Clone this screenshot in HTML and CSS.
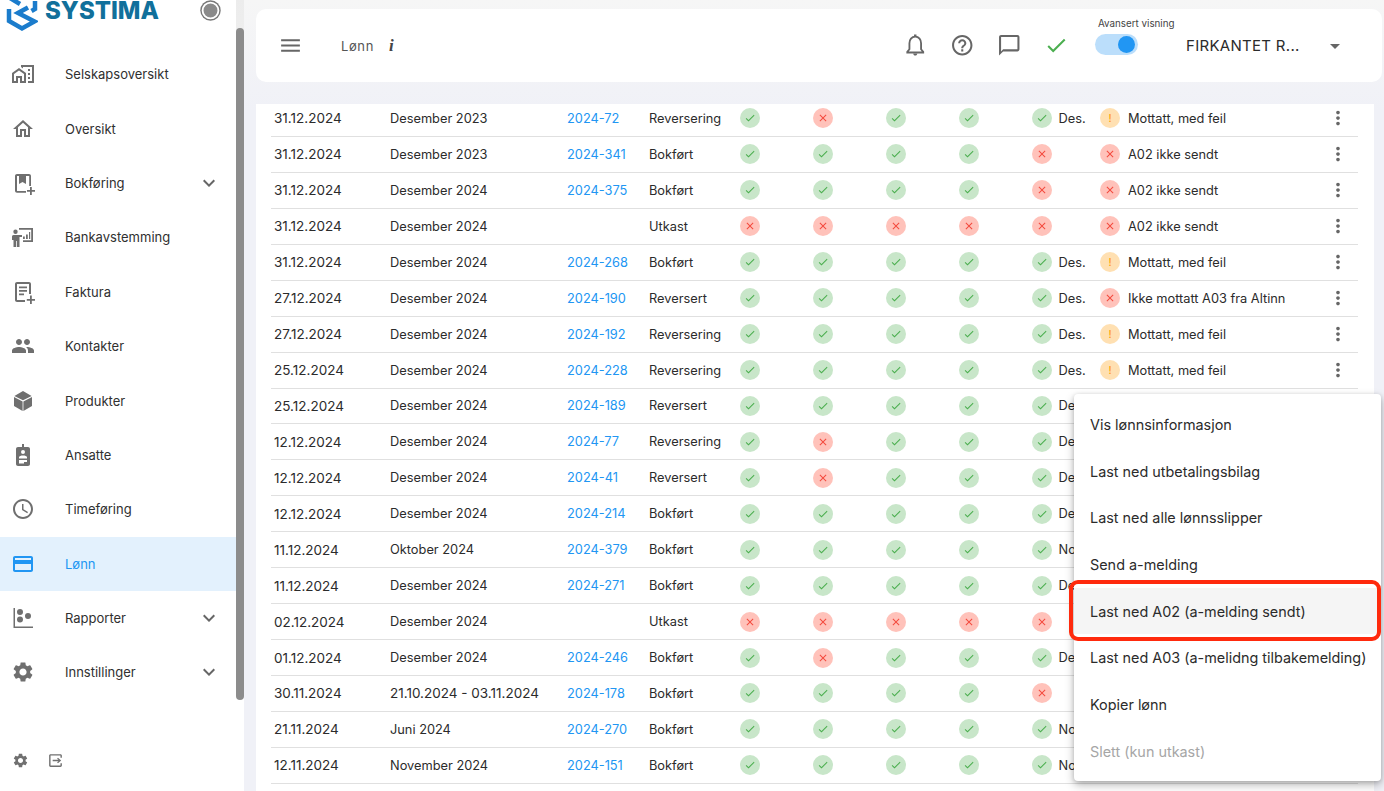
FILE: index.html
```html
<!DOCTYPE html>
<html lang="no">
<head>
<meta charset="utf-8">
<title>Lønn</title>
<link rel="stylesheet" href="styles.css">
</head>
<body>
<svg class="sprite" aria-hidden="true">
  <symbol id="ok" viewBox="0 0 24 24"><path d="M9 16.17L4.83 12l-1.42 1.41L9 19 21 7l-1.41-1.41z"/></symbol>
  <symbol id="no" viewBox="0 0 24 24"><path d="M19 6.41L17.59 5 12 10.59 6.41 5 5 6.41 10.59 12 5 17.59 6.41 19 12 13.41 17.59 19 19 17.59 13.41 12z"/></symbol>
  <symbol id="more" viewBox="0 0 24 24"><path d="M12 8c1.1 0 2-.9 2-2s-.9-2-2-2-2 .9-2 2 .9 2 2 2zm0 2c-1.1 0-2 .9-2 2s.9 2 2 2 2-.9 2-2-.9-2-2-2zm0 6c-1.1 0-2 .9-2 2s.9 2 2 2 2-.9 2-2-.9-2-2-2z"/></symbol>
  <symbol id="chev" viewBox="0 0 24 24"><path d="M16.59 8.59L12 13.17 7.41 8.59 6 10l6 6 6-6z"/></symbol>
  <symbol id="gear" viewBox="0 0 24 24"><path d="M19.14 12.94c.04-.3.06-.61.06-.94 0-.32-.02-.64-.07-.94l2.03-1.58c.18-.14.23-.41.12-.61l-1.92-3.32c-.12-.22-.37-.29-.59-.22l-2.39.96c-.5-.38-1.03-.7-1.62-.94l-.36-2.54c-.04-.24-.24-.41-.48-.41h-3.84c-.24 0-.43.17-.47.41l-.36 2.54c-.59.24-1.13.57-1.62.94l-2.39-.96c-.22-.08-.47 0-.59.22L2.74 8.87c-.12.21-.08.47.12.61l2.03 1.58c-.05.3-.09.63-.09.94s.02.64.07.94l-2.03 1.58c-.18.14-.23.41-.12.61l1.92 3.32c.12.22.37.29.59.22l2.39-.96c.5.38 1.03.7 1.62.94l.36 2.54c.05.24.24.41.48.41h3.84c.24 0 .44-.17.47-.41l.36-2.54c.59-.24 1.13-.56 1.62-.94l2.39.96c.22.08.47 0 .59-.22l1.92-3.32c.12-.22.07-.47-.12-.61l-2.01-1.58zM12 15.6c-1.98 0-3.6-1.62-3.6-3.6s1.62-3.6 3.6-3.6 3.6 1.62 3.6 3.6-1.62 3.6-3.6 3.6z"/></symbol>
</svg>

<aside class="sidebar">
  <div class="side-col">
    <div class="brand">
      <svg class="logo" viewBox="0 0 32 32"><path class="logo-a" d="M4 -2 L14 4 M29 1 V9 L25.500 11 M3 9 V21 L16 28.500 L28.500 21.500 L12 13 L22 7.500"/></svg>
      <span class="brand-name">SYSTIMA</span>
      <span class="brand-dot"></span>
    </div>
    <nav class="nav">
      <a class="nav-item"><svg class="nav-icon" viewBox="0 0 24 24"><path d="M1 11v10h6v-5h2v5h6V11L8 6l-7 5zm12 8h-2v-5H5v5H3v-7l5-3.5 5 3.5v7zm4-12h2v2h-2zm0 4h2v2h-2zm0 4h2v2h-2zM10 3v1.97l2 1.43V5h9v14h-4v2h6V3z"/></svg><span>Selskapsoversikt</span></a>
      <a class="nav-item"><svg class="nav-icon" viewBox="0 0 24 24"><path d="M12 5.69l5 4.5V18h-2v-6H9v6H7v-7.81l5-4.5M12 3L2 12h3v8h6v-6h2v6h6v-8h3L12 3z"/></svg><span>Oversikt</span></a>
      <a class="nav-item"><svg class="nav-icon" viewBox="0 0 24 24"><path d="M6 3h12c1.100 0 2 .9 2 2v10h-1.800V5H6v15h9v1.800H6c-1.100 0-2-.9-2-2V5c0-1.100.9-2 2-2zm2 2h7v8l-3.500-2L8 13zm11 11h1.800v3H24v1.800h-3.200V24H19v-3.200h-3V19h3z"/></svg><span>Bokføring</span><svg class="chev" viewBox="0 0 24 24"><use href="#chev"/></svg></a>
      <a class="nav-item"><svg class="nav-icon" viewBox="0 0 24 24"><path d="M8 3h14v14H12v-1.800h8.200V4.800H8zM4.500 4.500a2.200 2.200 0 1 1 0 4.400 2.200 2.200 0 0 1 0-4.400zM2.500 10h4.500l4 0v2H8.500v10H5.800v-6H5v6H2.500v-7H1v-3.200C1 10.800 1.500 10 2.500 10zM12 11.500h1.800v2.500H12zm3-2h1.800V14H15zm3-2.500h1.200v7H18z"/></svg><span>Bankavstemming</span></a>
      <a class="nav-item"><svg class="nav-icon" viewBox="0 0 24 24"><path d="M6 2h12c1.100 0 2 .9 2 2v10h-2V4H6v16h8v2H6c-1.100 0-2-.9-2-2V4c0-1.100.9-2 2-2zm2 4.500h8v1.800H8zm0 3.500h8v1.800H8zm0 3.500h5v1.800H8zM19 15.500h1.800V19H24v1.800h-3.200V24H19v-3.200h-3.200V19H19z"/></svg><span>Faktura</span></a>
      <a class="nav-item"><svg class="nav-icon" viewBox="0 0 24 24"><path d="M16 11c1.660 0 2.990-1.340 2.990-3S17.660 5 16 5c-1.660 0-3 1.340-3 3s1.340 3 3 3zm-8 0c1.660 0 2.990-1.340 2.990-3S9.660 5 8 5C6.340 5 5 6.340 5 8s1.340 3 3 3zm0 2c-2.330 0-7 1.170-7 3.500V19h14v-2.500c0-2.330-4.670-3.500-7-3.500zm8 0c-.29 0-.62.02-.97.05 1.160.84 1.970 1.970 1.970 3.450V19h6v-2.500c0-2.330-4.670-3.500-7-3.500z"/></svg><span>Kontakter</span></a>
      <a class="nav-item"><svg class="nav-icon" viewBox="0 0 24 24"><path d="M12 2l8.600 4.900L12 11.300 3.400 6.900zM3 8l8.600 4.400V22L3 17zM21 8v9l-8.600 5v-9.600z"/></svg><span>Produkter</span></a>
      <a class="nav-item"><svg class="nav-icon eo" viewBox="0 0 24 24"><path d="M11 1h2v3h4c1.100 0 2 .9 2 2v15c0 1.100-.9 2-2 2H7c-1.100 0-2-.9-2-2V6c0-1.100.9-2 2-2h4zM12 7a2 2 0 1 0 0 4 2 2 0 0 0 0-4zM8 15.500h8V14c0-.8-2-1.500-4-1.500S8 13.200 8 14zM8 17v3.500h5V19h3v-2z"/></svg><span>Ansatte</span></a>
      <a class="nav-item"><svg class="nav-icon" viewBox="0 0 24 24"><path d="M11.990 2C6.470 2 2 6.480 2 12s4.470 10 9.990 10C17.520 22 22 17.520 22 12S17.520 2 11.990 2zM12 20c-4.420 0-8-3.580-8-8s3.580-8 8-8 8 3.580 8 8-3.580 8-8 8zm.5-13H11v6l5.250 3.150.75-1.230-4.500-2.670z"/></svg><span>Timeføring</span></a>
      <a class="nav-item nav-active"><svg class="nav-icon" viewBox="0 0 24 24"><path d="M20 4H4c-1.110 0-1.990.89-1.990 2L2 18c0 1.110.89 2 2 2h16c1.110 0 2-.89 2-2V6c0-1.110-.89-2-2-2zm0 14H4v-6h16v6zm0-10H4V6h16v2z"/></svg><span>Lønn</span></a>
      <a class="nav-item"><svg class="nav-icon" viewBox="0 0 24 24"><path d="M2.500 2h1.500v18.500H22V22H2.500zM9 3a3 3 0 1 1 0 6 3 3 0 0 1 0-6zM9 10.500a3 3 0 1 1 0 6 3 3 0 0 1 0-6zm8-3.500a3 3 0 1 1 0 6 3 3 0 0 1 0-6z"/></svg><span>Rapporter</span><svg class="chev" viewBox="0 0 24 24"><use href="#chev"/></svg></a>
      <a class="nav-item"><svg class="nav-icon" viewBox="0 0 24 24"><use href="#gear"/></svg><span>Innstillinger</span><svg class="chev" viewBox="0 0 24 24"><use href="#chev"/></svg></a>
    </nav>
    <div class="side-foot">
      <svg class="foot-icon" viewBox="0 0 24 24"><use href="#gear"/></svg>
      <svg class="foot-icon" viewBox="0 0 24 24"><path d="M5 3h14c1.100 0 2 .9 2 2v3h-2V5H5v14h14v-3h2v3c0 1.100-.9 2-2 2H5c-1.100 0-2-.9-2-2V5c0-1.100.9-2 2-2zm10.500 5L20 12l-4.500 4-1.300-1.400 2.100-1.600H8v-2h8.300l-2.100-1.600z"/></svg>
    </div>
  </div>
  <div class="scroll-track"><div class="scroll-thumb"></div></div>
</aside>

<main class="main">
  <header class="topbar">
    <svg class="burger" viewBox="0 0 24 24"><path d="M3 18h18v-2H3v2zm0-5h18v-2H3v2zm0-7v2h18V6H3z"/></svg>
    <span class="page-title">Lønn</span>
    <span class="info">i</span>
    <div class="top-actions">
      <svg class="top-icon" viewBox="0 0 24 24"><path class="bell" d="M12 3.600c-3.600 0-5.700 2.900-5.700 6.500v5.800L4.200 18.500v.6h15.600v-.6l-2.100-2.600v-5.800c0-3.600-2.100-6.500-5.700-6.500z"/><path d="M10.800 1.500h2.400v2.500h-2.400zM10 20h4c0 1.100-.9 2-2 2s-2-.9-2-2z"/></svg>
      <svg class="top-icon" viewBox="0 0 24 24"><path d="M11 18h2v-2h-2v2zm1-16C6.480 2 2 6.480 2 12s4.480 10 10 10 10-4.480 10-10S17.520 2 12 2zm0 18c-4.410 0-8-3.590-8-8s3.590-8 8-8 8 3.590 8 8-3.590 8-8 8zm0-14c-2.210 0-4 1.790-4 4h2c0-1.100.9-2 2-2s2 .9 2 2c0 2-3 1.750-3 5h2c0-2.250 3-2.500 3-5 0-2.210-1.790-4-4-4z"/></svg>
      <svg class="top-icon" viewBox="0 0 24 24"><path d="M20 2H4c-1.100 0-2 .9-2 2v18l4-4h14c1.100 0 2-.9 2-2V4c0-1.100-.9-2-2-2zm0 14H6l-2 2V4h16v12z"/></svg>
      <svg class="top-icon top-ok" viewBox="0 0 24 24"><use href="#ok"/></svg>
    </div>
    <div class="toggle-wrap">
      <span class="toggle-label">Avansert visning</span>
      <span class="toggle"><span class="toggle-thumb"></span></span>
    </div>
    <span class="company">FIRKANTET R...</span>
    <svg class="company-arrow" viewBox="0 0 24 24"><path d="M7 10l5 5 5-5z"/></svg>
  </header>

  <section class="table">
    <div class="rows">
      <div class="row"><span>31.12.2024</span><span>Desember 2023</span><a class="link">2024-72</a><span>Reversering</span><i class="st g"><svg><use href="#ok"/></svg></i><i class="st r"><svg><use href="#no"/></svg></i><i class="st g"><svg><use href="#ok"/></svg></i><i class="st g"><svg><use href="#ok"/></svg></i><div class="cell"><i class="st g"><svg><use href="#ok"/></svg></i><span>Des.</span></div><div class="cell"><i class="st w">!</i><span>Mottatt, med feil</span></div><svg class="more"><use href="#more"/></svg></div>
      <div class="row"><span>31.12.2024</span><span>Desember 2023</span><a class="link">2024-341</a><span>Bokført</span><i class="st g"><svg><use href="#ok"/></svg></i><i class="st g"><svg><use href="#ok"/></svg></i><i class="st g"><svg><use href="#ok"/></svg></i><i class="st g"><svg><use href="#ok"/></svg></i><div class="cell"><i class="st r"><svg><use href="#no"/></svg></i></div><div class="cell"><i class="st r"><svg><use href="#no"/></svg></i><span>A02 ikke sendt</span></div><svg class="more"><use href="#more"/></svg></div>
      <div class="row"><span>31.12.2024</span><span>Desember 2024</span><a class="link">2024-375</a><span>Bokført</span><i class="st g"><svg><use href="#ok"/></svg></i><i class="st g"><svg><use href="#ok"/></svg></i><i class="st g"><svg><use href="#ok"/></svg></i><i class="st g"><svg><use href="#ok"/></svg></i><div class="cell"><i class="st r"><svg><use href="#no"/></svg></i></div><div class="cell"><i class="st r"><svg><use href="#no"/></svg></i><span>A02 ikke sendt</span></div><svg class="more"><use href="#more"/></svg></div>
      <div class="row"><span>31.12.2024</span><span>Desember 2024</span><a class="link"></a><span>Utkast</span><i class="st r"><svg><use href="#no"/></svg></i><i class="st r"><svg><use href="#no"/></svg></i><i class="st r"><svg><use href="#no"/></svg></i><i class="st r"><svg><use href="#no"/></svg></i><div class="cell"><i class="st r"><svg><use href="#no"/></svg></i></div><div class="cell"><i class="st r"><svg><use href="#no"/></svg></i><span>A02 ikke sendt</span></div><svg class="more"><use href="#more"/></svg></div>
      <div class="row"><span>31.12.2024</span><span>Desember 2024</span><a class="link">2024-268</a><span>Bokført</span><i class="st g"><svg><use href="#ok"/></svg></i><i class="st g"><svg><use href="#ok"/></svg></i><i class="st g"><svg><use href="#ok"/></svg></i><i class="st g"><svg><use href="#ok"/></svg></i><div class="cell"><i class="st g"><svg><use href="#ok"/></svg></i><span>Des.</span></div><div class="cell"><i class="st w">!</i><span>Mottatt, med feil</span></div><svg class="more"><use href="#more"/></svg></div>
      <div class="row"><span>27.12.2024</span><span>Desember 2024</span><a class="link">2024-190</a><span>Reversert</span><i class="st g"><svg><use href="#ok"/></svg></i><i class="st g"><svg><use href="#ok"/></svg></i><i class="st g"><svg><use href="#ok"/></svg></i><i class="st g"><svg><use href="#ok"/></svg></i><div class="cell"><i class="st g"><svg><use href="#ok"/></svg></i><span>Des.</span></div><div class="cell"><i class="st r"><svg><use href="#no"/></svg></i><span>Ikke mottatt A03 fra Altinn</span></div><svg class="more"><use href="#more"/></svg></div>
      <div class="row"><span>27.12.2024</span><span>Desember 2024</span><a class="link">2024-192</a><span>Reversering</span><i class="st g"><svg><use href="#ok"/></svg></i><i class="st g"><svg><use href="#ok"/></svg></i><i class="st g"><svg><use href="#ok"/></svg></i><i class="st g"><svg><use href="#ok"/></svg></i><div class="cell"><i class="st g"><svg><use href="#ok"/></svg></i><span>Des.</span></div><div class="cell"><i class="st w">!</i><span>Mottatt, med feil</span></div><svg class="more"><use href="#more"/></svg></div>
      <div class="row"><span>25.12.2024</span><span>Desember 2024</span><a class="link">2024-228</a><span>Reversering</span><i class="st g"><svg><use href="#ok"/></svg></i><i class="st g"><svg><use href="#ok"/></svg></i><i class="st g"><svg><use href="#ok"/></svg></i><i class="st g"><svg><use href="#ok"/></svg></i><div class="cell"><i class="st g"><svg><use href="#ok"/></svg></i><span>Des.</span></div><div class="cell"><i class="st w">!</i><span>Mottatt, med feil</span></div><svg class="more"><use href="#more"/></svg></div>
      <div class="row"><span>25.12.2024</span><span>Desember 2024</span><a class="link">2024-189</a><span>Reversert</span><i class="st g"><svg><use href="#ok"/></svg></i><i class="st g"><svg><use href="#ok"/></svg></i><i class="st g"><svg><use href="#ok"/></svg></i><i class="st g"><svg><use href="#ok"/></svg></i><div class="cell"><i class="st g"><svg><use href="#ok"/></svg></i><span>Des.</span></div></div>
      <div class="row"><span>12.12.2024</span><span>Desember 2024</span><a class="link">2024-77</a><span>Reversering</span><i class="st g"><svg><use href="#ok"/></svg></i><i class="st r"><svg><use href="#no"/></svg></i><i class="st g"><svg><use href="#ok"/></svg></i><i class="st g"><svg><use href="#ok"/></svg></i><div class="cell"><i class="st g"><svg><use href="#ok"/></svg></i><span>Des.</span></div></div>
      <div class="row"><span>12.12.2024</span><span>Desember 2024</span><a class="link">2024-41</a><span>Reversert</span><i class="st g"><svg><use href="#ok"/></svg></i><i class="st r"><svg><use href="#no"/></svg></i><i class="st g"><svg><use href="#ok"/></svg></i><i class="st g"><svg><use href="#ok"/></svg></i><div class="cell"><i class="st g"><svg><use href="#ok"/></svg></i><span>Des.</span></div></div>
      <div class="row"><span>12.12.2024</span><span>Desember 2024</span><a class="link">2024-214</a><span>Bokført</span><i class="st g"><svg><use href="#ok"/></svg></i><i class="st g"><svg><use href="#ok"/></svg></i><i class="st g"><svg><use href="#ok"/></svg></i><i class="st g"><svg><use href="#ok"/></svg></i><div class="cell"><i class="st g"><svg><use href="#ok"/></svg></i><span>Des.</span></div></div>
      <div class="row"><span>11.12.2024</span><span>Oktober 2024</span><a class="link">2024-379</a><span>Bokført</span><i class="st g"><svg><use href="#ok"/></svg></i><i class="st g"><svg><use href="#ok"/></svg></i><i class="st g"><svg><use href="#ok"/></svg></i><i class="st g"><svg><use href="#ok"/></svg></i><div class="cell"><i class="st g"><svg><use href="#ok"/></svg></i><span>Nov.</span></div></div>
      <div class="row"><span>11.12.2024</span><span>Desember 2024</span><a class="link">2024-271</a><span>Bokført</span><i class="st g"><svg><use href="#ok"/></svg></i><i class="st g"><svg><use href="#ok"/></svg></i><i class="st g"><svg><use href="#ok"/></svg></i><i class="st g"><svg><use href="#ok"/></svg></i><div class="cell"><i class="st g"><svg><use href="#ok"/></svg></i><span>Des.</span></div></div>
      <div class="row"><span>02.12.2024</span><span>Desember 2024</span><a class="link"></a><span>Utkast</span><i class="st r"><svg><use href="#no"/></svg></i><i class="st r"><svg><use href="#no"/></svg></i><i class="st r"><svg><use href="#no"/></svg></i><i class="st r"><svg><use href="#no"/></svg></i><div class="cell"><i class="st r"><svg><use href="#no"/></svg></i></div></div>
      <div class="row"><span>01.12.2024</span><span>Desember 2024</span><a class="link">2024-246</a><span>Bokført</span><i class="st g"><svg><use href="#ok"/></svg></i><i class="st r"><svg><use href="#no"/></svg></i><i class="st g"><svg><use href="#ok"/></svg></i><i class="st g"><svg><use href="#ok"/></svg></i><div class="cell"><i class="st g"><svg><use href="#ok"/></svg></i><span>Des.</span></div></div>
      <div class="row"><span>30.11.2024</span><span class="range">21.10.2024 - 03.11.2024</span><a class="link">2024-178</a><span>Bokført</span><i class="st g"><svg><use href="#ok"/></svg></i><i class="st g"><svg><use href="#ok"/></svg></i><i class="st g"><svg><use href="#ok"/></svg></i><i class="st g"><svg><use href="#ok"/></svg></i><div class="cell"><i class="st r"><svg><use href="#no"/></svg></i></div></div>
      <div class="row"><span>21.11.2024</span><span>Juni 2024</span><a class="link">2024-270</a><span>Bokført</span><i class="st g"><svg><use href="#ok"/></svg></i><i class="st g"><svg><use href="#ok"/></svg></i><i class="st g"><svg><use href="#ok"/></svg></i><i class="st g"><svg><use href="#ok"/></svg></i><div class="cell"><i class="st g"><svg><use href="#ok"/></svg></i><span>Nov.</span></div></div>
      <div class="row"><span>12.11.2024</span><span>November 2024</span><a class="link">2024-151</a><span>Bokført</span><i class="st g"><svg><use href="#ok"/></svg></i><i class="st g"><svg><use href="#ok"/></svg></i><i class="st g"><svg><use href="#ok"/></svg></i><i class="st g"><svg><use href="#ok"/></svg></i><div class="cell"><i class="st g"><svg><use href="#ok"/></svg></i><span>Nov.</span></div></div>
    </div>
  </section>
</main>

<div class="menu">
  <div class="menu-item">Vis lønnsinformasjon</div>
  <div class="menu-item">Last ned utbetalingsbilag</div>
  <div class="menu-item">Last ned alle lønnsslipper</div>
  <div class="menu-item">Send a-melding</div>
  <div class="menu-item menu-hot">Last ned A02 (a-melding sendt)<span class="red-box"></span></div>
  <div class="menu-item">Last ned A03 (a-melidng tilbakemelding)</div>
  <div class="menu-item">Kopier lønn</div>
  <div class="menu-item menu-off">Slett (kun utkast)</div>
</div>
</body>
</html>
```

FILE: styles.css
```css
* { box-sizing: border-box; }
html, body { height: 100%; }
body {
  margin: 0;
  height: 791px;
  overflow: hidden;
  display: flex;
  font-family: Inter, "Liberation Sans", sans-serif;
  color: #2b2b2b;
  background: linear-gradient(#f6f6f6, #f0f1f7 110px);
}
.sprite { display: none; }

/* sidebar */
.sidebar { width: 244px; flex: none; display: flex; background: #fff; }
.side-col { width: 236px; display: flex; flex-direction: column; }
.scroll-track { width: 8px; background: linear-gradient(#ececec, #f7f7f7 200px, #fff 500px); }
.scroll-thumb { margin-top: 28px; height: 672px; background: #8c8c8c; border-radius: 4px; }
.brand { height: 47px; display: flex; align-items: flex-start; position: relative; }
.logo { width: 32px; height: 32px; margin-left: 6px; flex: none; fill: none; }
.logo-a { stroke: #1b7ccc; stroke-width: 4.500; }
.brand-name { margin-left: 7px; font-size: 24px; line-height: 22px; font-weight: 800; color: #11709b; letter-spacing: 0; }
.brand-dot { position: absolute; left: 201px; top: 1px; width: 19px; height: 19px; border-radius: 50%; background: #8a8a8a; border: 2px solid #fff; box-shadow: 0 0 0 1.500px #777; transform: scale(.93); }
.nav { display: flex; flex-direction: column; }
.nav-item { height: 54.400px; display: flex; align-items: center; padding-left: 10.500px; font-size: 13px; color: #303030; position: relative; }
.nav-item > span { position: absolute; left: 65px; }
.nav-icon { width: 24px; height: 24px; fill: #6f6f6f; flex: none; }
.eo { fill-rule: evenodd; }
.chev { position: absolute; left: 197px; width: 24px; height: 24px; fill: #666; }
.nav-active { background: #e3f1fd; color: #2196f3; }
.nav-active .nav-icon { fill: #2196f3; }
.side-foot { margin-top: auto; height: 54px; padding: 0 0 22px 12px; display: flex; align-items: flex-end; gap: 18px; }
.foot-icon { width: 17px; height: 17px; fill: #707070; }

/* main */
.main { flex: 1; min-width: 0; padding: 9px 2px 0 12px; display: flex; flex-direction: column; }
.topbar { height: 73px; flex: none; background: #fff; border-radius: 10px; display: flex; align-items: center; padding-left: 22px; position: relative; }
.burger { width: 25px; height: 25px; fill: #666; flex: none; }
.page-title { margin-left: 38px; font-size: 13px; color: #555; letter-spacing: .6px; }
.info { margin-left: 15px; font-family: "Liberation Serif", serif; font-style: italic; font-weight: 700; font-size: 17px; color: #444; }
.top-actions { margin-left: auto; display: flex; align-items: center; gap: 22.500px; margin-right: 27px; }
.top-icon { width: 24.500px; height: 24.500px; fill: #666; }
.top-ok { fill: #4caf50; }
.top-icon .bell { fill: none; stroke: #666; stroke-width: 1.800; }
.toggle-wrap { width: 90px; display: flex; flex-direction: column; padding-top: 9px; align-self: flex-start; }
.toggle-label { font-size: 9.800px; line-height: 12px; color: #444; margin-left: 3px; white-space: nowrap; }
.toggle { margin-top: 4px; width: 43px; height: 21px; border-radius: 11px; background: #bbdefb; position: relative; }
.toggle-thumb { position: absolute; right: 3px; top: 2px; width: 17px; height: 17px; border-radius: 50%; background: #2196f3; }
.company { font-size: 15px; color: #2b2b2b; margin-left: 1px; width: 137px; letter-spacing: .3px; white-space: nowrap; }
.company-arrow { width: 24px; height: 24px; fill: #666; margin-right: 35px; flex: none; }

/* table */
.table { flex: 1; margin: 22px 8px 0 0; background: #fff; overflow: hidden; }
.rows { margin: -3px 16px 0 15px; }
.row {
  height: 35.950px;
  display: grid;
  grid-template-columns: 116px 177px 82px 90.500px 73px 73px 73px 73px 68.500px 224px 28px;
  align-items: center;
  padding-left: 3px;
  border-bottom: 1px solid #e0e0e0;
  font-size: 12.800px;
  white-space: nowrap;
}
.row > span:first-child, .row > .range { font-size: 13.500px; line-height: 16px; }
.link { color: #2196f3; }
.cell { display: flex; align-items: center; gap: 7px; }
.cell + .cell { gap: 8px; }
.st {
  width: 20px; height: 20px; border-radius: 50%;
  display: flex; align-items: center; justify-content: center;
  font-style: normal; font-size: 11px; flex: none;
}
.st svg { width: 12px; height: 12px; }
.g { background: #c8e6c9; fill: #4caf50; }
.r { background: #ffc2ba; fill: #f4493d; }
.w { background: #ffe0b2; color: #ff9800; }
.more { width: 22px; height: 22px; fill: #666; justify-self: center; }

/* menu */
.menu {
  position: absolute; left: 1074px; top: 394px; width: 307px; height: 387px;
  padding: 7px 0 0;
  background: #fff; border-radius: 4px;
  box-shadow: 0 4px 10px rgba(0,0,0,.28), 0 1px 4px rgba(0,0,0,.14);
}
.menu-item { height: 46.700px; display: flex; align-items: center; padding-left: 16px; font-size: 14.400px; color: #2b2b2b; position: relative; white-space: nowrap; }
.menu-hot { background: #f5f5f5; }
.menu-off { color: #a6a6a6; }
.red-box { position: absolute; left: -5px; right: 0; top: -8px; bottom: -7px; border: 4px solid #ff2a0d; border-radius: 9px; }
```
